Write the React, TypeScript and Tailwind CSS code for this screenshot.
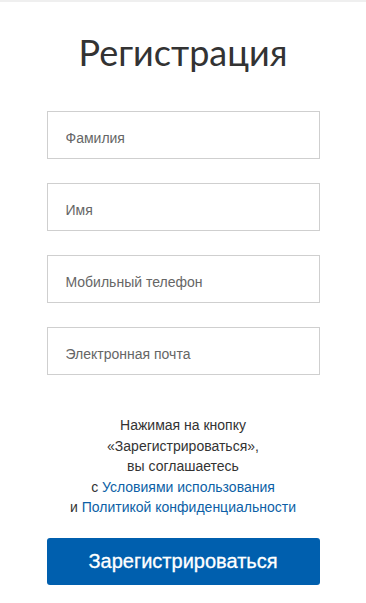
const FIELDS = ['Фамилия', 'Имя', 'Мобильный телефон', 'Электронная почта'];

export default function App() {
  return (
    <div className="min-h-[603px] border-t-2 border-[#efefef] bg-white font-['Liberation_Sans',Arial,sans-serif]">
      <div className="mx-auto w-[273px]">
        <h1 className="pt-[27px] text-center font-['Lato',sans-serif] text-[36px] leading-[46px] font-normal text-[#333]">
          Регистрация
        </h1>

        <div className="mt-[36px] flex flex-col gap-[24px]">
          {FIELDS.map((f) => (
            <input
              key={f}
              placeholder={f}
              className="h-[48px] w-full border border-[#cfcfcf] px-[18px] pt-[5px] text-[14px] text-[#333] placeholder:text-[#666] focus:outline-none"
            />
          ))}
        </div>

        <p className="mt-[40px] text-center text-[14px] leading-[20.5px] text-[#333]">
          Нажимая на кнопку
          <br />
          «Зарегистрироваться»,
          <br />
          вы соглашаетесь
          <br />
          с <a className="text-[#0d5fa6]">Условиями использования</a>
          <br />
          и <a className="text-[#0d5fa6]">Политикой конфиденциальности</a>
        </p>

        <button className="mt-[20px] h-[47px] w-full rounded-[3px] bg-[#005fae] text-[20px] text-white [-webkit-text-stroke:0.3px_white]">
          Зарегистрироваться
        </button>
      </div>
    </div>
  );
}
